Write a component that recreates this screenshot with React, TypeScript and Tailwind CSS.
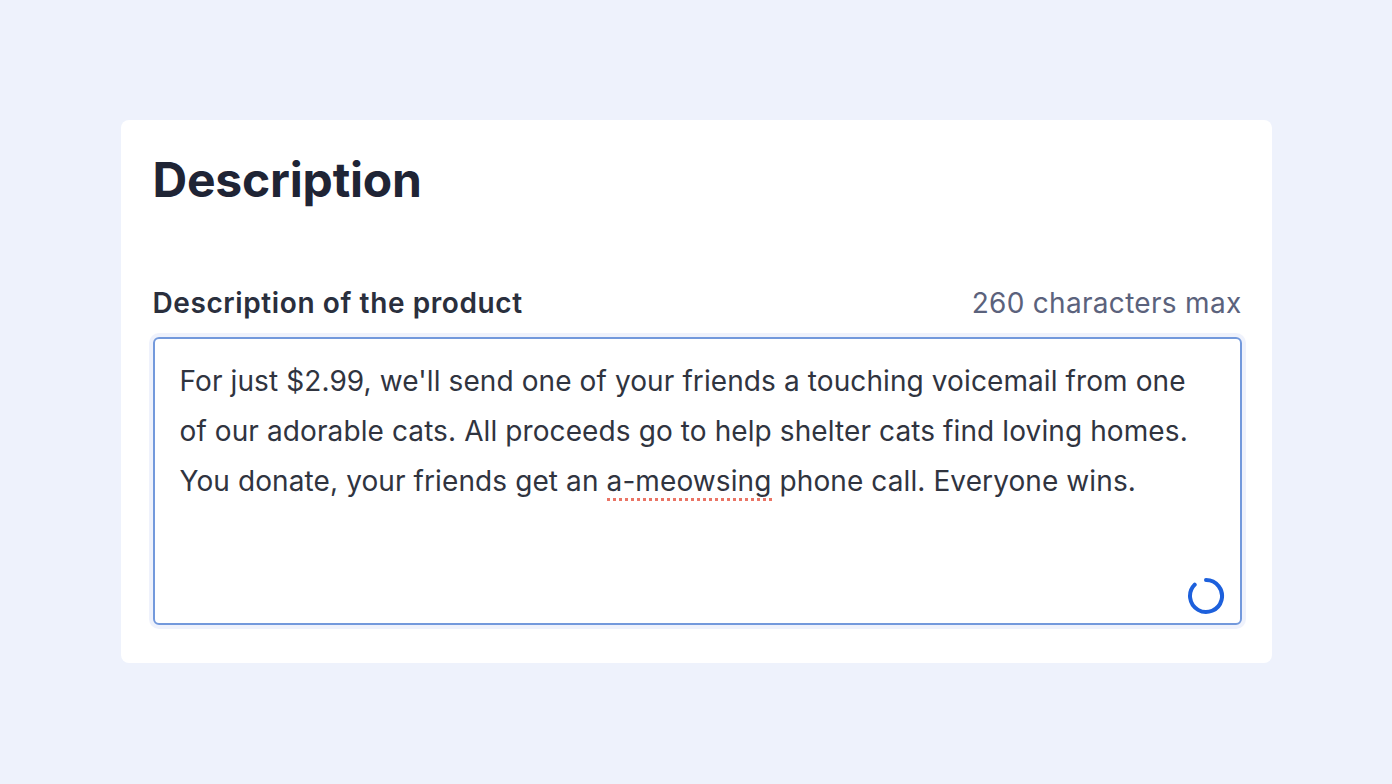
export default function App() {
  return (
    <div
      className="flex min-h-screen items-start justify-center bg-[#eef2fc] pt-[120px]"
      style={{ fontFamily: "Inter, 'Noto Sans', sans-serif" }}
    >
      <div className="w-[1151px] rounded-lg bg-white pb-[38px] pl-8 pr-[30px] pt-[30px]">
        <h1 className="text-[48px] font-bold leading-[60px] tracking-[-0.2px] text-[#1f2435]">
          Description
        </h1>
        <div className="mt-[77px] flex items-center justify-between">
          <label className="text-[28px] font-semibold leading-[32px] tracking-[0.6px] text-[#2a2f3d]">
            Description of the product
          </label>
          <span className="text-[28px] leading-[32px] tracking-[0.3px] text-[#5b627c]">
            260 characters max
          </span>
        </div>
        <div className="relative mt-[18px] h-[288px] rounded-md border-2 border-[#7399dc] px-[25px] pt-[17px] shadow-[0_0_0_4px_rgba(120,150,230,0.12)]">
          <p className="text-[28px] leading-[50px] tracking-[0.1px] text-[#30343f]">
            For just $2.99, we'll send one of your friends a touching voicemail from one
            of our adorable cats. All proceeds go to help shelter cats find loving homes.
            You donate, your friends get an{" "}
            <span className="border-b-[3px] border-dotted border-[#ea7465]">a-meowsing</span>{" "}
            phone call. Everyone wins.
          </p>
          <svg
            className="absolute bottom-[7px] right-[14px]"
            width="40"
            height="40"
            viewBox="0 0 40 40"
          >
            <path
              d="M20 4 A16 16 0 1 1 8.7 8.7"
              fill="none"
              stroke="#1d60dc"
              strokeWidth="4"
              strokeLinecap="round"
            />
          </svg>
        </div>
      </div>
    </div>
  );
}
